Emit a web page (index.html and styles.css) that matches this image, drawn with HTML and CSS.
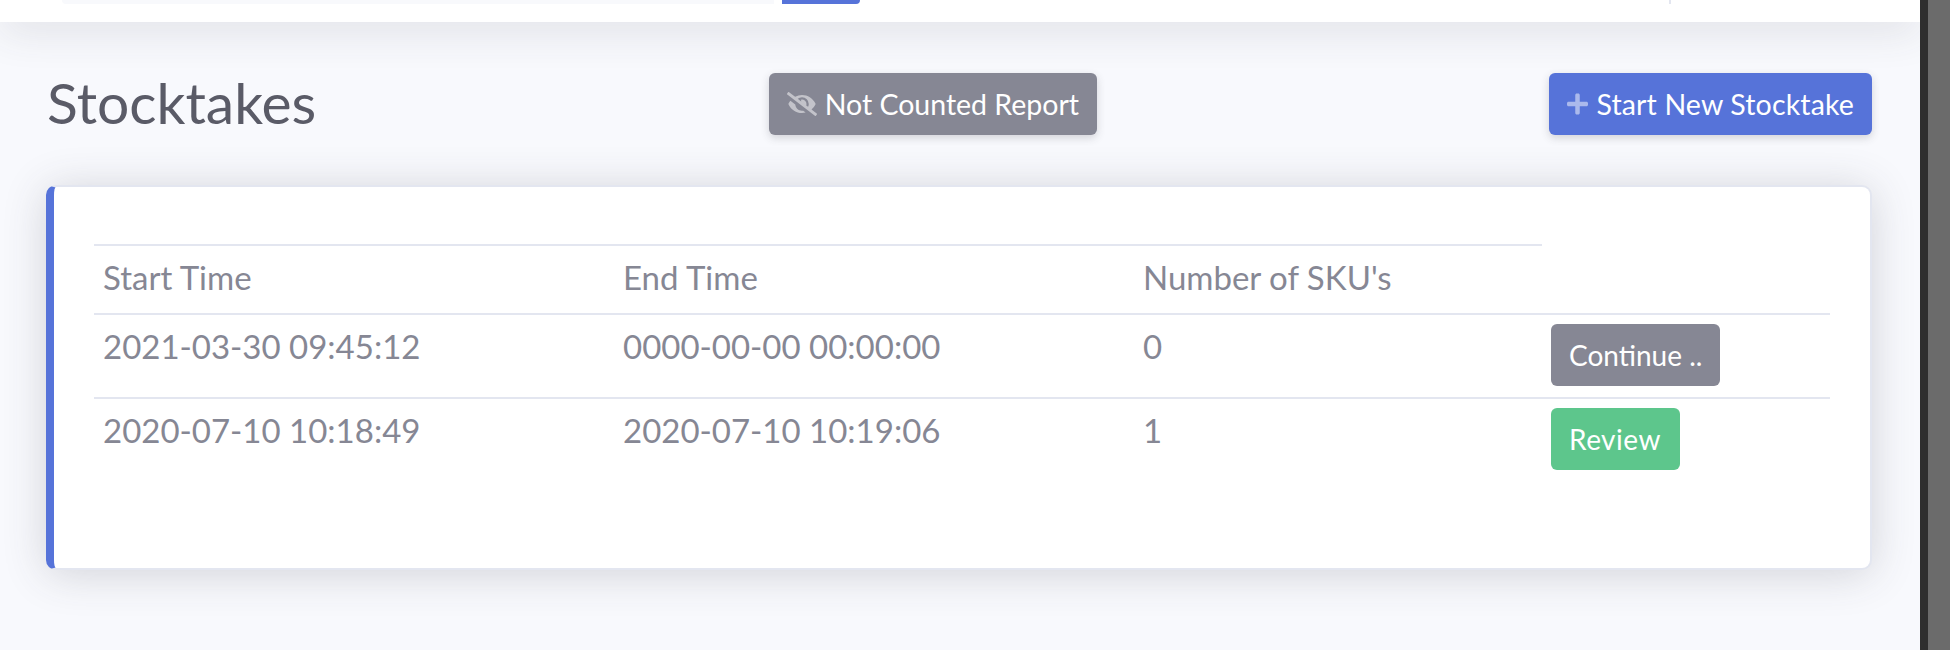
FILE: index.html
```html
<!DOCTYPE html>
<html lang="en">
<head>
  <meta charset="UTF-8">
  <meta name="viewport" content="width=device-width, initial-scale=1.0">
  <title>Stocktakes</title>
  <link rel="stylesheet" href="styles.css">
</head>
<body>
  <div class="window">
    <div class="content">
      <div class="topbar">
        <div class="search-input"></div>
        <div class="search-button"></div>
        <div class="topbar-divider"></div>
      </div>
      <div class="page-heading">
        <h1>Stocktakes</h1>
        <a href="#" class="btn btn-secondary shadow-sm">
          <svg class="icon icon-eye" viewBox="0 0 640 512"><path d="M320 400c-75.85 0-137.25-58.71-142.9-133.11L72.2 185.82c-13.79 17.3-26.48 35.59-36.72 55.59a32.35 32.35 0 0 0 0 29.19C89.71 376.41 197.07 448 320 448c26.91 0 52.87-4 77.89-10.46L346 397.39a144.13 144.13 0 0 1-26 2.61zm313.82 58.1l-110.55-85.44a331.25 331.25 0 0 0 81.25-102.07 32.35 32.35 0 0 0 0-29.19C550.29 135.59 442.93 64 320 64a308.15 308.15 0 0 0-147.32 37.7L45.46 3.37A16 16 0 0 0 23 6.18L3.37 31.45A16 16 0 0 0 6.18 53.9l588.36 454.73a16 16 0 0 0 22.46-2.81l19.64-25.27a16 16 0 0 0-2.82-22.45zm-183.72-142l-39.3-30.38A94.75 94.75 0 0 0 416 256a94.76 94.76 0 0 0-121.31-92.21A47.65 47.65 0 0 1 304 192a46.64 46.64 0 0 1-1.54 10l-73.61-56.89A142.31 142.31 0 0 1 320 112a143.92 143.92 0 0 1 144 144c0 21.63-5.29 41.79-13.9 60.11z"/></svg>
          Not Counted Report
        </a>
        <a href="#" class="btn btn-primary shadow-sm">
          <svg class="icon icon-plus" viewBox="0 0 448 512"><path d="M416 208H272V64c0-17.67-14.33-32-32-32h-32c-17.67 0-32 14.33-32 32v144H32c-17.67 0-32 14.33-32 32v32c0 17.67 14.33 32 32 32h144v144c0 17.67 14.33 32 32 32h32c17.67 0 32-14.33 32-32V304h144c17.67 0 32-14.33 32-32v-32c0-17.67-14.33-32-32-32z"/></svg>
          Start New Stocktake
        </a>
      </div>
      <div class="card">
        <table class="table">
          <thead>
            <tr>
              <th>Start Time</th>
              <th>End Time</th>
              <th>Number of SKU's</th>
            </tr>
          </thead>
          <tbody>
            <tr>
              <td>2021-03-30 09:45:12</td>
              <td>0000-00-00 00:00:00</td>
              <td>0</td>
              <td><a href="#" class="btn btn-secondary">Continue ..</a></td>
            </tr>
            <tr>
              <td>2020-07-10 10:18:49</td>
              <td>2020-07-10 10:19:06</td>
              <td>1</td>
              <td><a href="#" class="btn btn-success">Review</a></td>
            </tr>
          </tbody>
        </table>
      </div>
    </div>
    <div class="window-edge"></div>
  </div>
</body>
</html>
```

FILE: styles.css
```css
html, body {
  margin: 0;
  padding: 0;
  height: 650px;
  overflow: hidden;
}
body {
  font-family: 'Lato', 'Open Sans', sans-serif;
  font-size: 28px;
  line-height: 42px;
  color: #868794;
  background-color: #f8f9fd;
}
.window {
  display: flex;
  height: 650px;
}
.content {
  width: 1920px;
  flex: 0 0 1920px;
  overflow: hidden;
  background-color: #f8f9fd;
}
.window-edge {
  flex: 1;
  background-color: #6b6b6b;
  border-left: 8px solid #2f2f2f;
}

/* Top bar, only the bottom of it is in view */
.topbar {
  display: flex;
  align-items: flex-start;
  height: 22px;
  padding-left: 62px;
  background-color: white;
  box-shadow: 0 4px 44px rgba(58, 59, 69, 0.2);
}
.search-input {
  width: 712px;
  height: 4px;
  background-color: #f8f9fc;
  border-radius: 0 0 0 6px;
}
.search-button {
  width: 78px;
  height: 4px;
  margin-left: 8px;
  background-color: #5673d9;
  border-radius: 0 0 6px 0;
}
.topbar-divider {
  width: 2px;
  height: 4px;
  margin-left: 809px;
  background-color: #e3e6f0;
}

.page-heading {
  display: flex;
  justify-content: space-between;
  align-items: center;
  margin: 51px 48px 50px 47px;
}
.page-heading h1 {
  margin: 0 0 4px;
  font-size: 57px;
  font-weight: 400;
  line-height: 58px;
  color: #5a5b67;
}
.page-heading .btn {
  font-size: 28.5px;
}

.btn {
  display: inline-flex;
  align-items: center;
  padding: 10px 18px;
  border-radius: 6px;
  color: white;
  text-decoration: none;
  white-space: nowrap;
}
.btn-secondary {
  background-color: #868794;
}
.btn-primary {
  background-color: #5673d9;
  letter-spacing: 0.15px;
}
.btn-success {
  background-color: #5dc68c;
  padding-right: 19px;
  letter-spacing: 0.5px;
}
.shadow-sm {
  box-shadow: 0 3px 8px rgba(58, 59, 69, 0.2);
}
.icon {
  fill: rgba(255, 255, 255, 0.5);
  margin-right: 8px;
}
.icon-eye {
  width: 30px;
  height: 24px;
}
.icon-plus {
  width: 21px;
  height: 24px;
}

.card {
  height: 385px;
  box-sizing: border-box;
  margin: 0 48px 0 46px;
  padding: 57px 40px 0;
  background-color: white;
  border: 2px solid #e3e6f0;
  border-left: 8px solid #5673d9;
  border-radius: 10px;
  box-shadow: 0 4px 44px rgba(58, 59, 69, 0.2);
}
.table {
  width: 1736px;
  table-layout: fixed;
  border-collapse: collapse;
}
.table th,
.table td {
  padding: 9px 9px 11px;
  text-align: left;
  vertical-align: top;
  font-size: 33px;
  font-weight: 400;
}
.table th {
  padding-top: 10px;
  padding-bottom: 15px;
  border-top: 2px solid #e3e6f0;
}
.table td {
  border-top: 2px solid #e3e6f0;
}
.table td:not(:last-child) {
  padding-top: 10px;
}
.table td .btn {
  font-size: 28px;
}
.table th:nth-child(1),
.table th:nth-child(2) {
  width: 502px;
}
.table th:nth-child(3) {
  width: 390px;
}
```
